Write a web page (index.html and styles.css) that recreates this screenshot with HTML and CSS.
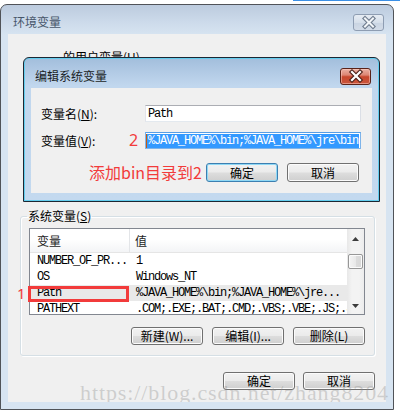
FILE: index.html
```html
<!DOCTYPE html>
<html>
<head>
<meta charset="utf-8">
<link rel="stylesheet" href="styles.css">
</head>
<body>
<div class="topline"></div>

<div class="win">
  <div class="win-title">
    <span class="win-caption">环境变量</span>
    <span class="close close-inactive">
      <svg width="30" height="17" viewBox="0 0 30 17"><path d="M11 4.5 L19 12.5 M19 4.5 L11 12.5" stroke="#6f7c8e" stroke-width="4.2" stroke-linecap="square" fill="none"/><path d="M11 4.5 L19 12.5 M19 4.5 L11 12.5" stroke="#f2f5f8" stroke-width="2" stroke-linecap="square" fill="none"/></svg>
    </span>
  </div>
  <div class="win-client">
    <div class="user-label">的用户变量(<u>U</u>)</div>
    <fieldset class="group">
      <legend>系统变量(<u>S</u>)</legend>
      <div class="list">
        <div class="list-main">
          <div class="list-head"><div class="h1">变量</div><div class="h2">值</div></div>
          <div class="row"><span class="c1">NUMBER_OF_PR...</span><span class="c2">1</span></div>
          <div class="row"><span class="c1">OS</span><span class="c2">Windows_NT</span></div>
          <div class="row sel"><span class="c1">Path</span><span class="c2">%JAVA_HOME%\bin;%JAVA_HOME%\jre...</span></div>
          <div class="row"><span class="c1">PATHEXT</span><span class="c2">.COM;.EXE;.BAT;.CMD;.VBS;.VBE;.JS;.JSE</span></div>
        </div>
        <div class="scrollbar">
          <div class="sb-btn"><svg width="7" height="4" viewBox="0 0 7 4"><path d="M0 4 L3.5 0 L7 4 Z" fill="#3c3c3c"/></svg></div>
          <div class="sb-track"><div class="sb-thumb"></div></div>
          <div class="sb-btn"><svg width="7" height="4" viewBox="0 0 7 4"><path d="M0 0 L3.5 4 L7 0 Z" fill="#3c3c3c"/></svg></div>
        </div>
      </div>
      <div class="btn-row group-btns">
        <button class="btn">新建(W)...</button>
        <button class="btn">编辑(I)...</button>
        <button class="btn">删除(L)</button>
      </div>
    </fieldset>
    <div class="btn-row bottom-btns">
      <button class="btn">确定</button>
      <button class="btn">取消</button>
    </div>
  </div>
</div>

<div class="dlg">
  <div class="dlg-title">
    <span class="dlg-caption">编辑系统变量</span>
    <span class="close close-red">
      <svg width="30" height="16" viewBox="0 0 30 16"><path d="M11 4 L19 12 M19 4 L11 12" stroke="#4a2018" stroke-width="4.4" stroke-linecap="square" fill="none"/><path d="M11 4 L19 12 M19 4 L11 12" stroke="#ffffff" stroke-width="2.2" stroke-linecap="square" fill="none"/></svg>
    </span>
  </div>
  <div class="dlg-client">
    <div class="field">
      <label class="lbl">变量名(<u>N</u>):</label>
      <div class="input"><span class="mono">Path</span></div>
    </div>
    <div class="field field2">
      <label class="lbl lbl-short">变量值(<u>V</u>):</label>
      <span class="red-num">2</span>
      <div class="input input-focus"><span class="mono sel-text">%JAVA_HOME%\bin;%JAVA_HOME%\jre\bin</span></div>
    </div>
    <div class="btn-row dlg-btns">
      <span class="red-note">添加bin目录到2</span>
      <button class="btn btn-default">确定</button>
      <button class="btn">取消</button>
    </div>
  </div>
</div>

<div class="mark1">1</div>
<div class="redbox"></div>
<div class="watermark"><span>https://blog.csdn.net/zhang8204</span></div>
</body>
</html>
```

FILE: styles.css
```css
html, body {
  margin: 0;
  padding: 0;
}
body {
  width: 400px;
  height: 412px;
  position: relative;
  overflow: hidden;
  background: #ffffff;
  font-family: "Noto Sans CJK SC", sans-serif;
  font-size: 12px;
  color: #000;
}
u { text-decoration: underline; text-underline-offset: 1px; }

.topline {
  position: absolute;
  left: 293px;
  top: 0;
  width: 107px;
  height: 1px;
  background: #3b8fe5;
}

/* outer window */
.win {
  position: absolute;
  left: 0;
  top: 4px;
  width: 394px;
  height: 406px;
  box-sizing: border-box;
  border: 1px solid #505358;
  border-radius: 7px 7px 0 0;
  background: linear-gradient(#bccbde 0, #cddbeb 18px, #d7e4f1 30px, #d7e4f1 100%);
  padding: 0 7px 7px 7px;
  display: flex;
  flex-direction: column;
}
.win-title {
  height: 29px;
  box-sizing: border-box;
  padding-top: 5px;
  display: flex;
  align-items: center;
}
.win-caption {
  margin-left: 5px;
  font-size: 12px;
  line-height: 14px;
  color: #47566a;
}
.close {
  margin-left: auto;
  display: flex;
  box-sizing: border-box;
  border-radius: 3px;
}
.close-inactive {
  width: 31px;
  height: 17px;
  margin-right: 2px;
  border: 1px solid #8e9db2;
  background: linear-gradient(#e6ecf4, #d6dfea 50%, #c9d4e2 51%, #d3dce8);
  align-items: center;
  justify-content: center;
}
.close-inactive svg { margin: -1px; }

.win-client {
  height: 368px;
  background: #f0f0f0;
  display: flex;
  flex-direction: column;
}
.user-label {
  margin: 17px 0 0 55px;
  line-height: 12px;
  height: 12px;
  font-size: 12px;
}

/* group */
.group {
  margin: 146px 0 0 12px;
  width: 355px;
  box-sizing: border-box;
  min-width: 0;
  border: 1px solid #d5dfe5;
  border-radius: 3px;
  box-shadow: inset 1px 1px 0 #fff, 1px 1px 0 #fff;
  padding: 5px 9px 10px 8px;
}
.group legend {
  font-size: 12px;
  line-height: 14px;
  padding: 0 1px;
  margin-left: -2px;
}

.list {
  height: 87px;
  box-sizing: border-box;
  border: 1px solid #828790;
  background: #fff;
  display: flex;
  overflow: hidden;
}
.list-main {
  flex: 1;
  overflow: hidden;
}
.list-head {
  display: flex;
  height: 23px;
  border-bottom: 1px solid #e5e5e5;
  background: linear-gradient(#ffffff 0, #ffffff 45%, #f3f4f6 100%);
  line-height: 23px;
  font-size: 12px;
  color: #1e1e1e;
}
.h1 {
  width: 100px;
  box-sizing: border-box;
  padding-left: 7px;
  border-right: 1px solid #e3e5e8;
}
.h2 {
  padding-left: 5px;
}
.row {
  display: flex;
  height: 16px;
  line-height: 16px;
  white-space: nowrap;
}
.row.sel {
  background: #e9e9e9;
}
.row span, .mono {
  font-family: "Liberation Mono", monospace;
  font-size: 12px;
  letter-spacing: -1.2px;
}
.c1 {
  width: 100px;
  box-sizing: border-box;
  padding-left: 7px;
  flex: none;
}
.c2 {
  padding-left: 6px;
}
.scrollbar {
  width: 17px;
  flex: none;
  display: flex;
  flex-direction: column;
  background: linear-gradient(to right, #e8e8e8, #f3f3f3 30%, #f3f3f3 70%, #ececec);
}
.sb-btn {
  height: 17px;
  display: flex;
  align-items: center;
  justify-content: center;
  flex: none;
}
.sb-btn:first-child { padding-top: 2px; box-sizing: border-box; }
.sb-track {
  flex: 1;
}
.sb-thumb {
  margin: 8px 1px 0 1px;
  height: 15px;
  box-sizing: border-box;
  border: 1px solid #979797;
  border-radius: 2px;
  background: linear-gradient(to right, #f4f4f4, #e9e9e9 50%, #dcdcdc 51%, #d8d8d8);
  box-shadow: inset 0 0 0 1px #fbfbfb;
}

/* buttons */
.btn-row {
  display: flex;
  justify-content: flex-end;
  align-items: center;
}
.group-btns {
  margin-top: 12px;
  gap: 9px;
}
.bottom-btns {
  margin-top: 16px;
  padding-right: 11px;
  gap: 8px;
}
.btn {
  width: 72px;
  height: 18px;
  box-sizing: border-box;
  padding: 0;
  margin: 0;
  border: 1px solid #707070;
  border-radius: 3px;
  background: linear-gradient(#f2f2f2 0%, #ebebeb 48%, #dddddd 52%, #cfcfcf 100%);
  box-shadow: inset 0 0 0 1px #fbfbfb;
  font-family: "Noto Sans CJK SC", sans-serif;
  font-size: 12px;
  line-height: 14px;
  color: #000;
}

/* dialog */
.dlg {
  position: absolute;
  left: 23px;
  top: 57px;
  width: 357px;
  height: 145px;
  box-sizing: border-box;
  border: 1px solid #1c2733;
  border-radius: 6px 6px 0 0;
  box-shadow: inset 0 0 0 1px #63cdee;
  background: linear-gradient(#a2bedc 0, #b4cce6 16px, #c1d7ee 28px, #c3d9ef 100%);
  padding: 0 7px 8px 7px;
  display: flex;
  flex-direction: column;
}
.dlg-title {
  height: 30px;
  box-sizing: border-box;
  padding-top: 6px;
  display: flex;
  align-items: center;
}
.dlg-caption {
  margin-left: 4px;
  font-size: 12px;
  line-height: 14px;
  color: #1b1f26;
}
.close-red {
  width: 31px;
  height: 17px;
  margin-right: 1px;
  border: 1px solid #5a2218;
  background: linear-gradient(#eab0a3 0%, #dd8674 40%, #c7472d 52%, #c9553c 100%);
  box-shadow: inset 0 0 0 1px rgba(255,210,200,0.5);
  align-items: center;
  justify-content: center;
}
.close-red svg { margin: -1px; }
.dlg-client {
  height: 105px;
  background: #f0f0f0;
  box-sizing: border-box;
  padding: 17px 11px 0 10px;
  display: flex;
  flex-direction: column;
}
.field {
  display: flex;
  align-items: center;
  height: 17px;
}
.field2 {
  margin-top: 10px;
}
.lbl {
  width: 104px;
  flex: none;
  font-size: 12px;
  line-height: 14px;
}
.lbl-short {
  width: 88px;
}
.red-num {
  width: 16px;
  flex: none;
  font-family: "Noto Sans", sans-serif;
  font-size: 16px;
  line-height: 17px;
  color: #f23b3b;
}
.input {
  width: 216px;
  height: 17px;
  box-sizing: border-box;
  border: 1px solid #abadb3;
  border-left-color: #e2e3ea;
  border-right-color: #dbdfe6;
  border-bottom-color: #e3e9ef;
  background: #fff;
  padding-left: 1px;
  display: flex;
  align-items: center;
  white-space: nowrap;
  overflow: hidden;
}
.input .mono {
  line-height: 14px;
  padding-left: 1px;
}
.input-focus {
  border-color: #569de5;
  border-bottom-color: #7eb4ea;
  border-left-color: #7eb4ea;
  border-right-color: #7eb4ea;
  padding-left: 0;
}
.sel-text {
  background: #3399ff;
  color: #fff;
  display: inline-block;
  height: 14px;
  padding-right: 1px;
  border-left: 1px solid #c55a11;
}
.dlg-btns {
  margin-top: 14px;
  gap: 9px;
  padding-right: 2px;
}
.dlg-btns .btn {
  height: 19px;
}
.red-note {
  font-size: 16px;
  line-height: 19px;
  color: #f23b3b;
  margin-right: -5px;
}
.btn-default {
  border-color: #3c7fb1;
  box-shadow: inset 0 0 0 1px #8fd8f5;
  background: linear-gradient(#f2f2f2 0%, #ebebeb 48%, #dddddd 52%, #cfcfcf 100%);
}

/* annotations */
.mark1 {
  position: absolute;
  left: 17px;
  top: 286px;
  font-family: "Noto Sans", sans-serif;
  font-size: 15px;
  line-height: 15px;
  color: #f23b3b;
}
.redbox {
  position: absolute;
  left: 28px;
  top: 286px;
  width: 101px;
  height: 16px;
  box-sizing: border-box;
  border: 3px solid #f23b3b;
}
.watermark {
  position: absolute;
  left: 80px;
  top: 381px;
  width: 318px;
  height: 21px;
  overflow: hidden;
}
.watermark span {
  display: block;
  font-family: "Liberation Serif", serif;
  font-size: 22px;
  line-height: 24px;
  letter-spacing: 0.9px;
  white-space: nowrap;
  color: rgba(140, 140, 140, 0.35);
}
```
